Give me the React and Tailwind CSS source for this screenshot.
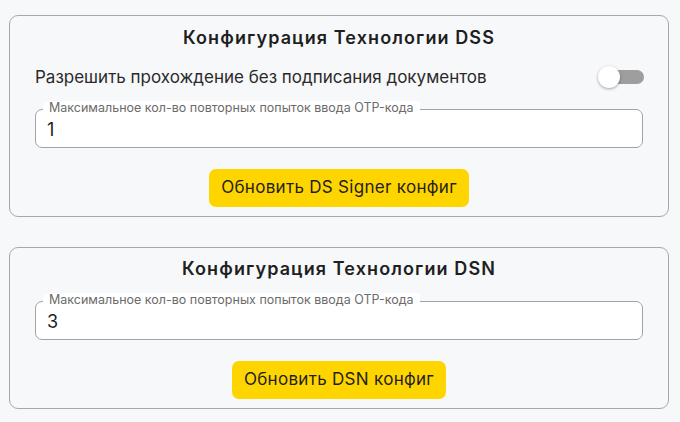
export default function App() {
  const font = { fontFamily: 'Inter, "Noto Sans", "Liberation Sans", sans-serif' };
  const Input = ({ value }) => (
    <div className="relative h-[39px] rounded-[7px] border border-[#a3a3a3] bg-white">
      <span className="absolute left-[7px] top-[-9px] rounded-tl-[6px] bg-white px-[6px] text-[12.5px] leading-[14px] text-[#6b6b6b]">
        Максимальное кол-во повторных попыток ввода OTP-кода
      </span>
      <div className="flex h-full items-center pl-[11px] pt-[1px] text-[18px] text-[#1f1f1f]">{value}</div>
    </div>
  );
  const Button = ({ children }) => (
    <div className="flex justify-center">
      <button className="h-[38px] rounded-[7px] bg-[#ffd500] px-[12px] text-[17px] tracking-[0.3px] text-[#1f1f1f]">{children}</button>
    </div>
  );
  return (
    <div className="min-h-[422px] bg-[#f7f8fa] pl-[9px] pr-[11px] pt-[15px]" style={font}>
      <div className="rounded-[9px] border border-[#a8a8a8] px-[25px] pb-[9px] pt-[10px]">
        <div className="h-[24px] text-center text-[18px] font-semibold leading-[24px] tracking-[1.1px] text-[#1f1f1f]">Конфигурация Технологии DSS</div>
        <div className="mt-[15px] flex h-[24px] items-center justify-between">
          <span className="pt-[2px] text-[17px] text-[#2a2a2a]">Разрешить прохождение без подписания документов</span>
          <div className="relative mr-[-1px] h-[24px] w-[46px]">
            <div className="absolute right-0 top-[5px] h-[14px] w-[36px] rounded-full bg-[#9e9e9e]"></div>
            <div className="absolute left-0 top-[1px] h-[22px] w-[22px] rounded-full bg-white shadow-[0_1px_3px_rgba(0,0,0,0.35)]"></div>
          </div>
        </div>
        <div className="mt-[20px]"><Input value="1" /></div>
        <div className="mt-[21px]"><Button>Обновить DS Signer конфиг</Button></div>
      </div>
      <div className="mt-[30px] rounded-[9px] border border-[#a8a8a8] px-[25px] pb-[9px] pt-[9px]">
        <div className="h-[24px] text-center text-[18px] font-semibold leading-[24px] tracking-[1.1px] text-[#1f1f1f]">Конфигурация Технологии DSN</div>
        <div className="mt-[20px]"><Input value="3" /></div>
        <div className="mt-[21px]"><Button>Обновить DSN конфиг</Button></div>
      </div>
    </div>
  );
}
